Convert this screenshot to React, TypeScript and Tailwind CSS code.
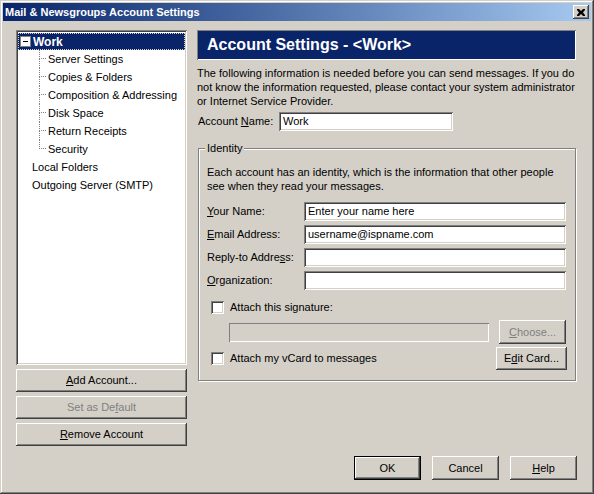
import React from 'react';

// Win2000-style 3D edges
const raised = 'shadow-[inset_-1px_-1px_#404040,inset_1px_1px_#ffffff,inset_-2px_-2px_#808080,inset_2px_2px_#d4d0c8]';
const sunken = 'shadow-[inset_1px_1px_#808080,inset_-1px_-1px_#ffffff,inset_2px_2px_#404040,inset_-2px_-2px_#d4d0c8]';

const Btn = ({ children, className = '', disabled = false, isDefault = false }: { children: React.ReactNode; className?: string; disabled?: boolean; isDefault?: boolean }) => (
  <div
    className={`flex items-center justify-center bg-[#d4d0c8] ${isDefault ? 'border border-black shadow-[inset_-1px_-1px_#404040,inset_1px_1px_#ffffff,inset_-2px_-2px_#808080]' : raised} ${disabled ? 'text-[#808080]' : 'text-black'} ${className}`}
  >
    {children}
  </div>
);

const Field = ({ value = '', className = '', disabled = false }: { value?: string; className?: string; disabled?: boolean }) => (
  <div className={`h-[19px] ${disabled ? 'bg-[#d4d0c8]' : 'bg-white'} ${sunken} flex items-center pl-[4px] ${className}`}>
    {value}
  </div>
);

const Check = () => (
  <div className={`w-[13px] h-[13px] bg-white ${sunken}`} />
);

const u = (s: string) => <span className="underline underline-offset-[1px]">{s}</span>;

const children = ['Server Settings', 'Copies & Folders', 'Composition & Addressing', 'Disk Space', 'Return Receipts', 'Security'];

export default function App() {
  return (
    <div className="w-[594px] h-[494px] bg-[#d4d0c8] font-['Liberation_Sans',Arial,sans-serif] text-[11px] text-black leading-none shadow-[inset_-1px_-1px_#404040,inset_1px_1px_#d4d0c8,inset_-2px_-2px_#808080,inset_2px_2px_#ffffff] p-[3px] flex flex-col">
      {/* title bar */}
      <div className="h-[18px] flex items-center justify-between pl-[2px] pr-[2px] bg-gradient-to-r from-[#0a246a] to-[#a6caf0]">
        <span className="text-white font-bold text-[11px]">Mail &amp; Newsgroups Account Settings</span>
        <div className={`w-[16px] h-[14px] bg-[#d4d0c8] ${raised} flex items-center justify-center`}>
          <svg width="8" height="7" viewBox="0 0 8 7">
            <path d="M0 0h2l2 2 2-2h2v1L6 3.5 8 6v1H6L4 5 2 7H0V6l2-2.5L0 1z" fill="#000" />
          </svg>
        </div>
      </div>

      <div className="flex-1 flex pl-[13px] pr-[15px] pt-[9px]">
        {/* left column */}
        <div className="w-[171px] flex flex-col">
          <div className={`h-[335px] bg-white ${sunken} p-[2px]`}>
            <div className="h-[17px] mt-[1px] bg-[#0a246a] outline-1 outline-dotted outline-[#d4d0c8] -outline-offset-1 flex items-center pl-[2px]">
              <div className="w-[11px] h-[11px] bg-white border border-[#808080] flex items-center justify-center">
                <div className="w-[5px] h-[1px] bg-black" />
              </div>
              <span className="ml-[2px] text-white font-bold text-[12px]">Work</span>
            </div>
            {children.map((c, i) => (
              <div key={c} className="h-[18px] flex">
                <div className="w-[21px]" />
                <div className="w-[7px] flex flex-col">
                  <div className="h-[9px] border-l border-b border-dotted border-[#808080]" />
                  <div className={`flex-1 ${i < children.length - 1 ? 'border-l border-dotted border-[#808080]' : ''}`} />
                </div>
                <div className="flex items-center pl-[2px]">{c}</div>
              </div>
            ))}
            <div className="h-[18px] flex items-center pl-[14px]">Local Folders</div>
            <div className="h-[18px] flex items-center pl-[14px]">Outgoing Server (SMTP)</div>
          </div>
          <Btn className="h-[23px] mt-[4px]">{u('A')}dd Account...</Btn>
          <Btn className="h-[23px] mt-[4px]" disabled>Set as De{u('f')}ault</Btn>
          <Btn className="h-[23px] mt-[4px]">{u('R')}emove Account</Btn>
        </div>

        {/* right column */}
        <div className="flex-1 ml-[10px] flex flex-col">
          <div className="h-[30px] bg-[#0a246a] shadow-[inset_1px_1px_#808080,inset_-1px_-1px_#ffffff] flex items-center pl-[10px]">
            <span className="text-white font-bold text-[16px]">Account Settings - &lt;Work&gt;</span>
          </div>
          <p className="mt-[6px] leading-[14px]">
            The following information is needed before you can send messages. If you do<br />
            not know the information requested, please contact your system administrator<br />
            or Internet Service Provider.
          </p>
          <div className="flex items-center mt-[4px] ml-[1px]">
            <span className="w-[81px]">Account {u('N')}ame:</span>
            <Field value="Work" className="w-[174px]" />
          </div>

          <div className="mt-[17px] ml-[1px] mr-0 h-[233px] border border-[#808080] shadow-[inset_1px_1px_#ffffff,1px_1px_#ffffff] px-[8px] flex flex-col">
            <span className="-mt-[6px] self-start bg-[#d4d0c8] px-[2px] -ml-[2px]">Identity</span>
            <p className="mt-[11px] leading-[14px]">
              Each account has an identity, which is the information that other people<br />
              see when they read your messages.
            </p>
            <div className="flex flex-col gap-[4px] mt-[9px]">
              <div className="flex items-center">
                <span className="w-[97px]">{u('Y')}our Name:</span>
                <Field value="Enter your name here" className="w-[262px]" />
              </div>
              <div className="flex items-center">
                <span className="w-[97px]">{u('E')}mail Address:</span>
                <Field value="username@ispname.com" className="w-[262px]" />
              </div>
              <div className="flex items-center">
                <span className="w-[97px]">Reply-to Addre{u('s')}s:</span>
                <Field className="w-[262px]" />
              </div>
              <div className="flex items-center">
                <span className="w-[97px]">{u('O')}rganization:</span>
                <Field className="w-[262px]" />
              </div>
            </div>
            <div className="flex items-center mt-[11px] ml-[4px]">
              <Check />
              <span className="ml-[6px]">Attach this signature:</span>
            </div>
            <div className="flex items-center mt-[6px] ml-[22px]">
              <Field disabled className="w-[260px] shadow-[inset_1px_1px_#808080,inset_-1px_-1px_#ffffff]" />
              <Btn disabled className="w-[67px] h-[24px] ml-[10px]">{u('C')}hoose...</Btn>
            </div>
            <div className="flex items-center justify-between mt-[3px]">
              <div className="flex items-center ml-[4px]">
                <Check />
                <span className="ml-[6px]">Attach my vCard to messages</span>
              </div>
              <Btn className="w-[71px] h-[23px]">E{u('d')}it Card...</Btn>
            </div>
          </div>

          <div className="flex justify-end gap-[11px] mt-[75px] mr-[-1px]">
            <Btn isDefault className="w-[67px] h-[24px]">OK</Btn>
            <Btn className="w-[67px] h-[24px]">Cancel</Btn>
            <Btn className="w-[67px] h-[24px]">{u('H')}elp</Btn>
          </div>
        </div>
      </div>
    </div>
  );
}
